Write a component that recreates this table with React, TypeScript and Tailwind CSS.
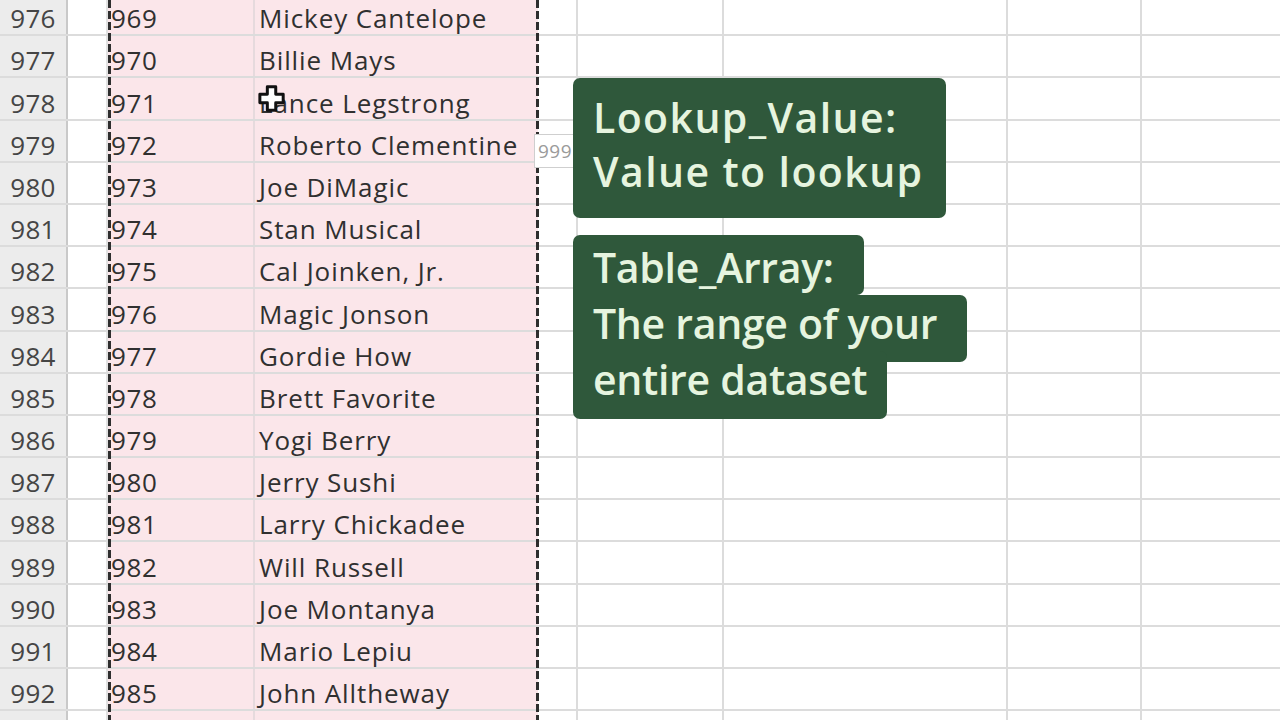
import React from "react";

const rows: [string, string, string][] = [
  ["976", "969", "Mickey Cantelope"],
  ["977", "970", "Billie Mays"],
  ["978", "971", "Lance Legstrong"],
  ["979", "972", "Roberto Clementine"],
  ["980", "973", "Joe DiMagic"],
  ["981", "974", "Stan Musical"],
  ["982", "975", "Cal Joinken, Jr."],
  ["983", "976", "Magic Jonson"],
  ["984", "977", "Gordie How"],
  ["985", "978", "Brett Favorite"],
  ["986", "979", "Yogi Berry"],
  ["987", "980", "Jerry Sushi"],
  ["988", "981", "Larry Chickadee"],
  ["989", "982", "Will Russell"],
  ["990", "983", "Joe Montanya"],
  ["991", "984", "Mario Lepiu"],
  ["992", "985", "John Alltheway"],
  ["", "", ""],
];

const cellText = "text-[26px] text-[#303030] leading-none pb-[3px] flex items-end";

export default function App() {
  return (
    <div
      className="relative w-[1280px] h-[720px] overflow-hidden bg-white"
      style={{ fontFamily: '"Open Sans", "Noto Sans", sans-serif' }}
    >
      <div className="flex flex-col -mt-[6px]">
        {rows.map(([n, id, name], i) => (
          <div
            key={i}
            className="grid grid-cols-[68px_40px_147px_283px_40px_146px_284px_134px_1fr] h-[42.2px] border-b-2 border-[#dcdcdc]"
          >
            <div className="bg-[#ececec] border-r-2 border-[#c9c9c9] flex items-end justify-center pb-[3px] text-[26px] leading-none text-[#454545] tracking-[0.3px]">
              {n}
            </div>
            <div className="border-r-2 border-[#e2e2e2]" />
            <div className={`bg-[#fbe6ea] border-r-2 border-[#e6dadd] pl-[3px] tracking-[0.6px] ${cellText}`}>
              {id}
            </div>
            <div className={`bg-[#fbe6ea] pl-[4px] tracking-[0.9px] ${cellText}`}>{name}</div>
            <div className="border-r-2 border-[#dcdcdc]" />
            <div className="border-r-2 border-[#dcdcdc]" />
            <div className="border-r-2 border-[#dcdcdc]" />
            <div className="border-r-2 border-[#dcdcdc]" />
            <div />
          </div>
        ))}
      </div>

      {/* marching ants selection border */}
      <div className="absolute left-[108px] top-0 h-[720px] w-[3px] bg-[repeating-linear-gradient(to_bottom,#2e2e2e_0px,#2e2e2e_8px,transparent_8px,transparent_11px)]" />
      <div className="absolute left-[536px] top-0 h-[720px] w-[3px] bg-[repeating-linear-gradient(to_bottom,#2e2e2e_0px,#2e2e2e_8px,transparent_8px,transparent_11px)]" />

      {/* fill tooltip */}
      <div className="absolute left-[534px] top-[134px] w-[40px] h-[34px] bg-white border border-[#cfcfcf] flex items-center pl-[3px] text-[19px] text-[#9a9a9a] tracking-[0.5px]">
        999
      </div>

      {/* cell cursor */}
      <svg className="absolute left-[257px] top-[84px]" width="30" height="28" viewBox="0 0 32 30">
        <path
          d="M11 3 h9 v8 h8 v9 h-8 v8 h-9 v-8 h-8 v-9 h8 z"
          fill="#ffffff"
          stroke="#111"
          strokeWidth="3.2"
          strokeLinejoin="round"
        />
      </svg>

      {/* caption boxes */}
      <div
        className="absolute left-[573px] top-[78px] flex flex-col items-start gap-[17px] text-[41px] text-[#e6f4df] font-semibold"
        style={{ fontFamily: '"Open Sans", sans-serif' }}
      >
        <div className="bg-[#2f583b] rounded-[7px] pl-[20px] pr-[22px] pt-[12px] pb-[20px] leading-[54px] tracking-[1.4px]">
          <div>Lookup_Value:</div>
          <div>Value to lookup</div>
        </div>
        <div className="flex flex-col items-start leading-[56px] tracking-[-0.3px]">
          <div className="bg-[#2f583b] rounded-t-[7px] rounded-br-[7px] pl-[20px] pr-[30px] pt-[4px]">Table_Array:</div>
          <div className="bg-[#2f583b] rounded-r-[7px] pl-[20px] pr-[30px] pb-[11px]">The range of your</div>
          <div className="relative bg-[#2f583b] rounded-b-[7px] rounded-tr-[7px] pl-[20px] pr-[20px] pb-[12px] -mt-[11px]">
            entire dataset
          </div>
        </div>
      </div>
    </div>
  );
}
